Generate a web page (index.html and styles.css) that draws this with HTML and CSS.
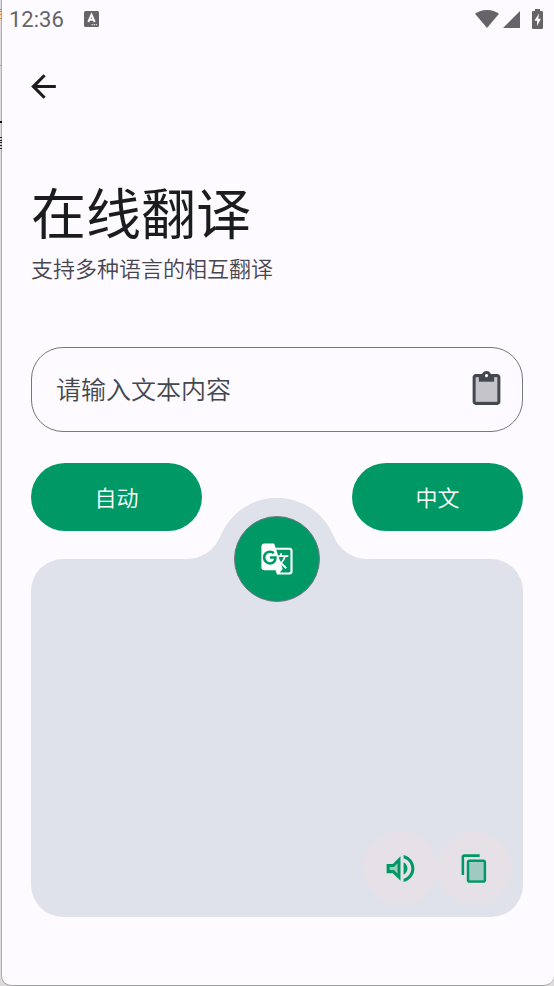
FILE: index.html
```html
<!DOCTYPE html>
<html lang="zh-CN">
<head>
<meta charset="utf-8">
<meta name="viewport" content="width=device-width, initial-scale=1">
<title>在线翻译</title>
<link rel="stylesheet" href="styles.css">
</head>
<body>
<div class="screen">
  <header class="status">
    <span class="clock">12:36</span>
    <svg class="status-app" viewBox="0 0 15 16" aria-hidden="true"><rect width="15" height="16" rx="1.5" fill="#666468"/><path d="M4.3 11 7.5 3.6l3.2 7.4M5.4 8.8h4.2" fill="none" stroke="#fdfbff" stroke-width="1.9"/><path d="M7.5 13.7h1.3m.8 0h1.3m.8 0H13" stroke="#fdfbff" stroke-width="1.1"/></svg>
    <span class="status-icons">
      <svg width="24" height="18" viewBox="0 0 24 18" aria-hidden="true"><path d="M12 18 0 3.8C3.2 1.3 7.3 0 12 0s8.800 1.300 12 3.800z"/></svg>
      <svg width="17" height="18" viewBox="0 0 17 18" aria-hidden="true"><path d="M17 1v17H0z"/></svg>
      <svg class="battery" width="11" height="20" viewBox="0 0 11 20" aria-hidden="true"><path fill-rule="evenodd" d="M3 0h5v2h2a1 1 0 0 1 1 1v16a1 1 0 0 1-1 1H1a1 1 0 0 1-1-1V3a1 1 0 0 1 1-1h2zM7 4.500 2.300 11.800H5V17l4-7.200H6.300z"/></svg>
    </span>
  </header>
  <nav class="topbar">
    <button class="icon-button back" type="button" aria-label="返回">
      <svg width="37" height="37" viewBox="0 0 24 24" aria-hidden="true"><path d="M20 11H7.830l5.590-5.590L12 4l-8 8 8 8 1.410-1.410L7.830 13H20z"/></svg>
    </button>
  </nav>
  <main class="content">
    <h1>在线翻译</h1>
    <p class="subtitle">支持多种语言的相互翻译</p>
    <div class="field">
      <input type="text" placeholder="请输入文本内容" aria-label="请输入文本内容">
      <button class="icon-button paste" type="button" aria-label="粘贴">
        <svg width="37" height="37" viewBox="0 0 24 24" aria-hidden="true"><path opacity=".3" d="M17 7H7V4H5v16h14V4h-2z"/><path d="M19 2h-4.180C14.400.840 13.300 0 12 0S9.600.840 9.180 2H5c-1.100 0-2 .9-2 2v16c0 1.100.9 2 2 2h14c1.100 0 2-.9 2-2V4c0-1.100-.9-2-2-2zm-7 0c.55 0 1 .45 1 1s-.45 1-1 1-1-.45-1-1 .45-1 1-1zm7 18H5V4h2v3h10V4h2z"/></svg>
      </button>
    </div>
    <div class="languages">
      <button class="language" type="button">自动</button>
      <button class="language" type="button">中文</button>
    </div>
    <section class="result">
      <svg class="bump" width="180" height="62" viewBox="0 0 180 62" aria-hidden="true"><path d="M0 61A36 36 0 0 0 33.300 38.300A61 61 0 0 1 146.700 38.300A36 36 0 0 0 180 61V62H0z"/></svg>
      <button class="icon-button translate" type="button" aria-label="翻译">
        <svg width="34" height="34" viewBox="0 0 24 24" aria-hidden="true"><path d="M21 4H11l-1-3H3c-1.100 0-2 .9-2 2v15c0 1.100.9 2 2 2h8l1 3h9c1.100 0 2-.9 2-2V6c0-1.100-.9-2-2-2zM7 16c-2.760 0-5-2.240-5-5s2.240-5 5-5c1.350 0 2.480.5 3.350 1.300L9.030 8.570c-.38-.36-1.040-.78-2.030-.78-1.740 0-3.150 1.440-3.150 3.210S5.260 14.210 7 14.210c2.010 0 2.840-1.440 2.920-2.410v-.01H7v-1.710h4.680c.07.31.12.61.12 1.020C11.800 13.970 9.890 16 7 16zm6.170-5.420h3.700c-.43 1.250-1.110 2.430-2.050 3.470-.31-.35-.6-.72-.86-1.100l-.79-2.370zm8.330 9.920c0 .55-.45 1-1 1H14l2-2.500-1.040-3.100 3.100 3.100.92-.92-3.300-3.250.02-.02c1.130-1.250 1.930-2.690 2.400-4.220H20v-1.300h-4.530V8h-1.290v1.290h-1.440L11.460 5.500h9.040c.55 0 1 .45 1 1v14z"/></svg>
      </button>
      <button class="icon-button action" type="button" aria-label="朗读">
        <svg width="37" height="37" viewBox="0 0 24 24" aria-hidden="true"><path opacity=".3" d="M5 11v2h2.830L10 15.170V8.830L7.830 11z"/><path d="M3 9v6h4l5 5V4L7 9H3zm7-.17v6.340L7.830 13H5v-2h2.830L10 8.830zm4-.86v8.050c1.480-.73 2.500-2.250 2.500-4.020 0-1.770-1.020-3.290-2.500-4.030zm0-4.740v2.060c2.890.86 5 3.540 5 6.710s-2.110 5.850-5 6.710v2.060c4.010-.91 7-4.490 7-8.770 0-4.280-2.990-7.860-7-8.770z"/></svg>
      </button>
      <button class="icon-button action" type="button" aria-label="复制">
        <svg width="31" height="31" viewBox="0 0 24 24" aria-hidden="true"><path opacity=".3" d="M8 7h11v14H8z"/><path d="M16 1H4c-1.100 0-2 .9-2 2v14h2V3h12V1zm3 4H8c-1.100 0-2 .9-2 2v14c0 1.100.9 2 2 2h11c1.100 0 2-.9 2-2V7c0-1.100-.9-2-2-2zm0 16H8V7h11v14z"/></svg>
      </button>
    </section>
  </main>
</div>
<svg class="window-edge" width="2" height="150" viewBox="0 0 2 150" aria-hidden="true"><path stroke="#e8801c" d="M0 9.500h2M0 11.500h2M0 14.500h2M0 18.500h2"/><path stroke="#aaa" d="M0 65.500h2"/><path stroke="#111" stroke-width="2" d="M0 122h2"/><path stroke="#222" d="M0 137.500h2M0 140.500h2M0 142.500h2M0 145.500h2M0 148.500h2"/></svg>
</body>
</html>
```
FILE: styles.css
```css
* {
  box-sizing: border-box;
}

body {
  margin: 0;
  background: #dcdcdc;
  color: #1a1c1e;
  font-family: Roboto, "Noto Sans CJK SC", sans-serif;
}

button,
input {
  font-family: inherit;
}

.screen {
  display: flex;
  flex-direction: column;
  min-height: 100vh;
  margin-left: 1px;
  border-left: 1px solid #b0b0b0;
  border-bottom: 1px solid #a0a0a0;
  border-radius: 0 0 10px 10px;
  background: #fdfbff;
}

.window-edge {
  position: absolute;
  top: 0;
  left: 0;
}

.status {
  display: flex;
  align-items: center;
  height: 37px;
  padding: 0 11px 0 7px;
  color: #666468;
}

.clock {
  padding-top: 2px;
  font-size: 22px;
  line-height: 36px;
}

.status-app {
  width: 15px;
  height: 16px;
  margin-left: 20px;
}

.status-icons {
  display: flex;
  align-items: center;
  gap: 4px;
  margin-left: auto;
  fill: #666468;
}

.battery {
  margin-left: 8px;
}

.icon-button {
  display: flex;
  align-items: center;
  justify-content: center;
  padding: 0;
  border: 0;
  background: none;
  fill: currentColor;
  cursor: pointer;
}

.topbar {
  padding: 31px 23px 0;
}

.back {
  color: #1a1c1e;
}

.content {
  display: flex;
  flex: 1;
  flex-direction: column;
  padding: 74px 31px 68px 29px;
}

h1 {
  margin: 0;
  font-size: 55px;
  font-weight: 400;
  line-height: 72px;
}

.subtitle {
  margin: 4px 0 0;
  color: #49454f;
  font-size: 22px;
  font-weight: 350;
  line-height: 30px;
}

.field {
  display: flex;
  align-items: center;
  height: 85px;
  margin-top: 62px;
  padding: 0 17px 0 24px;
  border: 1px solid #73777f;
  border-radius: 32px;
}

.field input {
  flex: 1;
  min-width: 0;
  padding: 2px 0 0;
  border: 0;
  outline: 0;
  background: none;
  color: #1a1c1e;
  font-size: 25px;
  font-weight: 350;
  line-height: 36px;
}

.field input::placeholder {
  color: #43474e;
  opacity: 1;
}

.paste {
  color: #43474e;
}

.languages {
  display: grid;
  grid-template-columns: 171px 171px;
  justify-content: space-between;
  margin-top: 31px;
}

.language {
  height: 68px;
  padding: 0 0 2px;
  border: 0;
  border-radius: 34px;
  background: #009966;
  color: #fff;
  font-size: 22px;
  font-weight: 350;
  cursor: pointer;
}

.result {
  position: relative;
  display: flex;
  flex: 1;
  align-items: flex-end;
  justify-content: flex-end;
  min-height: 240px;
  margin-top: 28px;
  padding: 12px;
  border-radius: 32px;
  background: #dfe2eb;
}

.bump {
  position: absolute;
  top: -61px;
  left: calc(50% - 90px);
  fill: #dfe2eb;
}

.translate {
  position: absolute;
  top: -43px;
  left: calc(50% - 43px);
  width: 86px;
  height: 86px;
  border: 1px solid #73777f;
  border-radius: 50%;
  background: #009966;
  color: #fff;
}

.action {
  width: 74px;
  height: 74px;
  border-radius: 50%;
  background: #e6e0e7;
  color: #009966;
}
```
